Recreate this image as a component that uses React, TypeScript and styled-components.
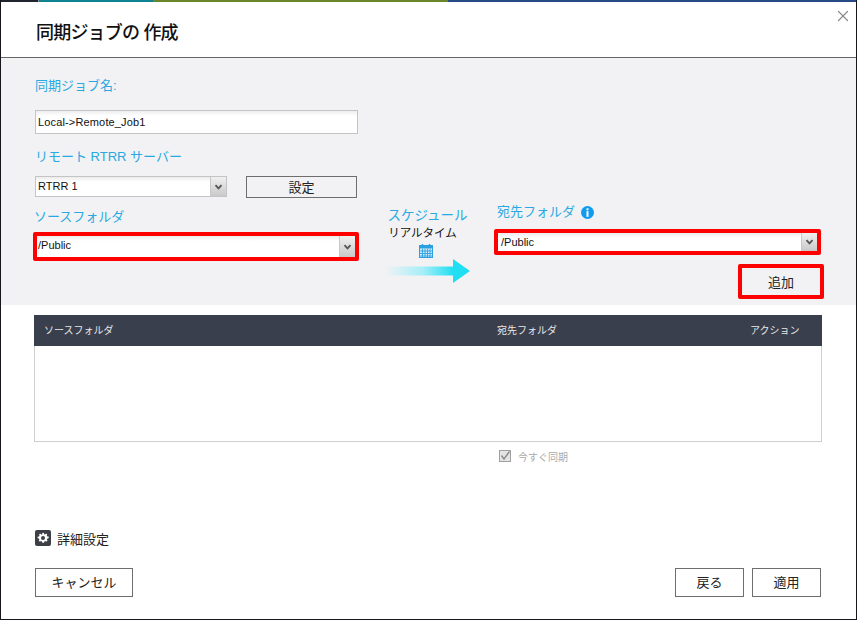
import React from "react";
import styled, { createGlobalStyle } from "styled-components";
import { X } from "lucide-react";

const GlobalStyle = createGlobalStyle`
  html, body {
    margin: 0;
    padding: 0;
    background: #fff;
  }
  * {
    box-sizing: border-box;
  }
`;

const Dialog = styled.div`
  position: relative;
  width: 857px;
  height: 620px;
  display: flex;
  flex-direction: column;
  background: #fff;
  border-left: 1px solid #15171c;
  border-right: 1px solid #15171c;
  border-bottom: 1px solid #15171c;
  font-family: "Liberation Sans", "Noto Sans CJK JP", sans-serif;
  color: #222;
  overflow: hidden;
`;

const Stripe = styled.div`
  display: flex;
  height: 2px;
  margin: 0 -1px;
  flex: none;
`;

const StripePart = styled.div<{ $w: number; $c: string }>`
  width: ${(p) => p.$w}px;
  background: ${(p) => p.$c};
  flex: ${(p) => (p.$w ? "none" : "1")};
`;

const Header = styled.header`
  height: 56px;
  flex: none;
  display: flex;
  align-items: center;
  padding: 6px 0 0 35px;
  border-bottom: 1px solid #666;
`;

const Title = styled.h1`
  margin: 0;
  font-size: 18px;
  font-weight: 500;
  line-height: 24px;
  color: #111;
  letter-spacing: -0.8px;
`;

const CloseButton = styled.button`
  position: absolute;
  top: 7px;
  right: 4px;
  width: 18px;
  height: 18px;
  padding: 0;
  border: 0;
  background: none;
  color: #8b8b8b;
  display: flex;
`;

const FormPanel = styled.section`
  height: 247px;
  flex: none;
  background: #f2f2f4;
  padding: 18px 0 0 34px;
`;

const Label = styled.div`
  font-size: 13px;
  line-height: 20px;
  color: #29a9e1;
  display: flex;
  align-items: center;
  gap: 6px;
`;

const TextBox = styled.div`
  width: 323px;
  height: 24px;
  margin: 14px 0 13px;
  padding-left: 2px;
  background: linear-gradient(#eee, #fff 5px);
  border: 1px solid #c4c4c4;
  font-size: 11px;
  letter-spacing: 0.15px;
  line-height: 22px;
  color: #111;
`;

const ServerRow = styled.div`
  display: flex;
  gap: 19px;
  margin: 9px 0 10px;
`;

const Select = styled.div<{ $w?: number }>`
  width: ${(p) => (p.$w ? `${p.$w}px` : "100%")};
  height: ${(p) => (p.$w ? "21px" : "100%")};
  display: flex;
  background: linear-gradient(#ececec, #fff 5px);
  border: ${(p) => (p.$w ? "1px solid #c4c4c4" : "0")};
  font-size: 11px;
  color: #111;
`;

const SelectValue = styled.div<{ $pad: number }>`
  flex: 1;
  padding-left: ${(p) => p.$pad}px;
  line-height: 19px;
`;

const SelectArrow = styled.div`
  width: 16px;
  flex: none;
  display: flex;
  align-items: center;
  justify-content: center;
  background: linear-gradient(#f0f0f0, #c9c9c9);
  border-left: 1px solid #c8c8c8;
  color: #555;
`;

const Button = styled.button<{ $w: number; $h?: number }>`
  width: ${(p) => p.$w}px;
  height: ${(p) => p.$h ?? 29}px;
  padding: 0;
  background: #fff;
  border: 1px solid #6e6e6e;
  font-family: inherit;
  font-size: 13px;
  line-height: 1;
  color: #222;
`;

const SettingsButton = styled(Button)`
  background: #f2f2f4;
`;

const FolderRow = styled.div`
  display: grid;
  grid-template-columns: 326px 135px 327px;
  margin-left: -2px;
`;

const SourceColumn = styled.div`
  padding-left: 1px;
  margin-top: -1px;
`;

const SourceBox = styled.div`
  margin: 5px 0 0 -1px;
  height: 29px;
`;

const ScheduleColumn = styled.div`
  display: flex;
  flex-direction: column;
  align-items: center;
  padding: 0 24px 0 26px;
  margin-top: -2px;
`;

const DestColumn = styled.div`
  margin-top: -6px;
`;

const DestLabel = styled(Label)`
  padding-left: 3px;
`;

const DestBox = styled.div`
  margin-top: 7px;
  height: 26px;
`;

const RedFrame = styled.div`
  height: 100%;
  border: 4px solid #f00;
  border-radius: 2px;
  background: #fff;
`;

const ScheduleLabel = styled(Label)`
  font-size: 13.5px;
  white-space: nowrap;
`;

const ScheduleMode = styled.div`
  font-size: 11.5px;
  line-height: 14px;
  margin-right: 10px;
  white-space: nowrap;
  color: #111;
`;

const CalendarIcon = styled.svg`
  display: block;
  margin: 4px 3px 1px 0;
  flex: none;
`;

const ArrowIcon = styled.svg`
  display: block;
  flex: none;
`;

const AddWrap = styled.div`
  display: flex;
  justify-content: flex-end;
  margin: 9px -3px 0 0;
`;

const AddButton = styled.button`
  width: 86px;
  height: 35px;
  padding: 0;
  background: #f2f2f4;
  border: 4px solid #f00;
  border-radius: 2px;
  font-family: inherit;
  font-size: 13px;
  color: #222;
`;

const Content = styled.main`
  flex: 1;
  display: flex;
  flex-direction: column;
  padding: 10px 34px 0 33px;
`;

const Table = styled.div`
  height: 127px;
  border: 1px solid #cfcfcf;
  border-top: 0;
`;

const TableHead = styled.div`
  height: 31px;
  margin: 0 -1px;
  display: grid;
  grid-template-columns: 453px 253px 1fr;
  align-items: center;
  padding-left: 10px;
  background: #3a3f4d;
  color: #e8e8e8;
  font-size: 10px;
  line-height: 14px;
`;

const SyncRow = styled.label`
  display: flex;
  align-items: center;
  gap: 7px;
  margin: 8px 0 0 465px;
  height: 12px;
  font-size: 10px;
  color: #aaa;
`;

const SyncBox = styled.svg`
  flex: none;
`;

const Advanced = styled.div`
  display: flex;
  align-items: center;
  gap: 6px;
  margin: 67px 0 0 1px;
  height: 18px;
  font-size: 13px;
  color: #222;
`;

const GearIcon = styled.svg`
  flex: none;
`;

const Footer = styled.footer`
  display: flex;
  align-items: center;
  margin: 21px 1px 0 1px;
`;

const FooterRight = styled.div`
  margin-left: auto;
  display: flex;
  gap: 8px;
`;

const Chevron = () => (
  <svg width="9" height="6" viewBox="0 0 9 6">
    <path d="M1.5 1.2 L4.5 4.4 L7.5 1.2" fill="none" stroke="currentColor" strokeWidth="1.8" />
  </svg>
);

const App = () => {
  return (
    <Dialog>
      <GlobalStyle />
      <Stripe>
        <StripePart $w={38} $c="#20242e" />
        <StripePart $w={1} $c="#8c9296" />
        <StripePart $w={114} $c="#0d8291" />
        <StripePart $w={295} $c="#69862b" />
        <StripePart $w={0} $c="#264a85" />
      </Stripe>
      <Header>
        <Title>同期ジョブの 作成</Title>
      </Header>
      <CloseButton aria-label="close">
        <X size={18} strokeWidth={1.6} />
      </CloseButton>

      <FormPanel>
        <Label>同期ジョブ名:</Label>
        <TextBox>Local-&gt;Remote_Job1</TextBox>
        <Label>リモート RTRR サーバー</Label>
        <ServerRow>
          <Select $w={192}>
            <SelectValue $pad={2}>RTRR 1</SelectValue>
            <SelectArrow>
              <Chevron />
            </SelectArrow>
          </Select>
          <SettingsButton $w={111} $h={22}>
            設定
          </SettingsButton>
        </ServerRow>
        <FolderRow>
          <SourceColumn>
            <Label>ソースフォルダ</Label>
            <SourceBox>
              <RedFrame>
                <Select>
                  <SelectValue $pad={1}>/Public</SelectValue>
                  <SelectArrow>
                    <Chevron />
                  </SelectArrow>
                </Select>
              </RedFrame>
            </SourceBox>
          </SourceColumn>
          <ScheduleColumn>
            <ScheduleLabel>スケジュール</ScheduleLabel>
            <ScheduleMode>リアルタイム</ScheduleMode>
            <CalendarIcon width="14" height="14" viewBox="0 0 14 14">
              <path d="M3.5 0v2M10.5 0v2" stroke="#2b9fe0" strokeWidth="1.5" />
              <rect x="0.5" y="1.5" width="13" height="12" fill="#d4ecfb" stroke="#2b9fe0" />
              <rect x="1" y="2" width="12" height="2.5" fill="#2b9fe0" />
              <path
                d="M1 7h12M1 9.5h12M1 12h12M3.5 5v8M6 5v8M8.5 5v8M11 5v8"
                stroke="#2b9fe0"
                strokeWidth="0.9"
              />
            </CalendarIcon>
            <ArrowIcon width="85" height="24" viewBox="0 0 85 24">
              <defs>
                <linearGradient id="flow" x1="0" x2="1" y1="0" y2="0">
                  <stop offset="0" stopColor="#f2f2f4" />
                  <stop offset="0.45" stopColor="#a6eef8" />
                  <stop offset="0.8" stopColor="#20dff2" />
                </linearGradient>
              </defs>
              <path d="M0 7.5H68V0L85 12L68 24V16.5H0Z" fill="url(#flow)" />
            </ArrowIcon>
          </ScheduleColumn>
          <DestColumn>
            <DestLabel>
              宛先フォルダ
              <svg width="13" height="13" viewBox="0 0 13 13">
                <circle cx="6.5" cy="6.5" r="6.5" fill="#0f9bf0" />
                <rect x="5.5" y="2.3" width="2" height="2" fill="#fff" />
                <rect x="5.5" y="5.2" width="2" height="5.6" fill="#fff" />
              </svg>
            </DestLabel>
            <DestBox>
              <RedFrame>
                <Select>
                  <SelectValue $pad={3}>/Public</SelectValue>
                  <SelectArrow>
                    <Chevron />
                  </SelectArrow>
                </Select>
              </RedFrame>
            </DestBox>
            <AddWrap>
              <AddButton>追加</AddButton>
            </AddWrap>
          </DestColumn>
        </FolderRow>
      </FormPanel>

      <Content>
        <Table>
          <TableHead>
            <span>ソースフォルダ</span>
            <span>宛先フォルダ</span>
            <span>アクション</span>
          </TableHead>
        </Table>
        <SyncRow>
          <SyncBox width="12" height="12" viewBox="0 0 12 12">
            <rect x="0.5" y="0.5" width="11" height="11" fill="#e4e4e4" stroke="#a0a0a0" />
            <path d="M2.5 5.5L5 9L10.5 1.5" fill="none" stroke="#8a8a8a" strokeWidth="1.4" />
          </SyncBox>
          今すぐ同期
        </SyncRow>
        <Advanced>
          <GearIcon width="16" height="16" viewBox="0 0 16 16">
            <rect width="16" height="16" rx="2" fill="#3c3f46" />
            <path
              d="M8 2.8l1 .3.3 1.3 1-.1.9-.9 1 1-.4 1.1.6.9 1.3.2v1.6l-1.3.3-.5 1 .6 1.1-1.1 1.1-1.1-.6-.9.4-.4 1.2H7.3l-.4-1.2-.9-.4-1.1.6-1.1-1.1.6-1.1-.5-1-1.3-.3V6.8l1.3-.2.6-.9-.4-1.1 1-1 1 .9 1-.1.3-1.3z"
              fill="#fff"
            />
            <circle cx="8" cy="8" r="2" fill="#3c3f46" />
          </GearIcon>
          詳細設定
        </Advanced>
        <Footer>
          <Button $w={98}>キャンセル</Button>
          <FooterRight>
            <Button $w={69}>戻る</Button>
            <Button $w={69}>適用</Button>
          </FooterRight>
        </Footer>
      </Content>
    </Dialog>
  );
};

export default App;
